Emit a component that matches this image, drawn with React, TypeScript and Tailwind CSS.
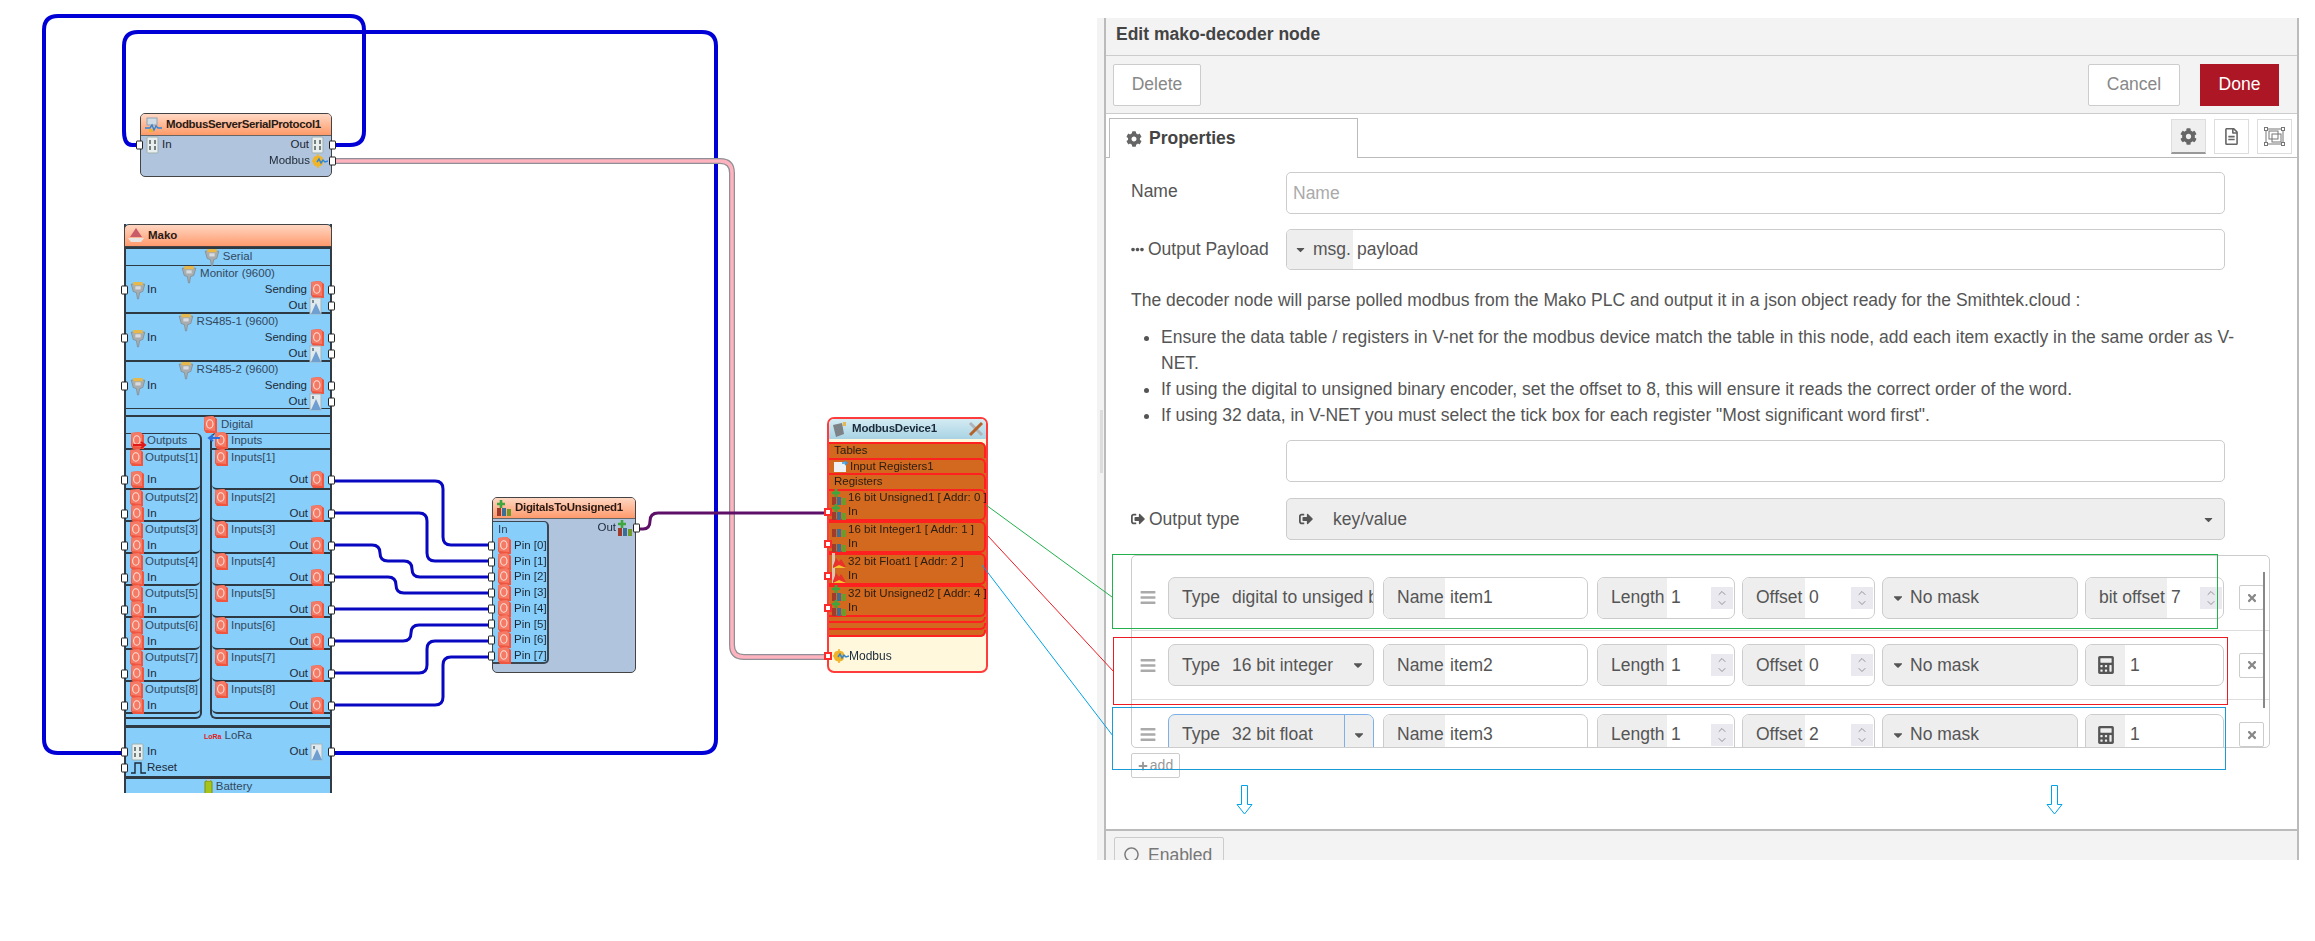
import type { ReactNode } from 'react';
import { ChevronDown, ChevronUp } from 'lucide-react';
import {
  FaBars,
  FaCalculator,
  FaCaretDown,
  FaCog,
  FaEllipsisH,
  FaPlus,
  FaRegCircle,
  FaRegFileAlt,
  FaSignOutAlt,
  FaTimes,
} from 'react-icons/fa';

// rounded polyline for the wires
function route(pts: number[][], r = 9) {
  let d = `M${pts[0][0]} ${pts[0][1]}`;
  for (let i = 1; i < pts.length - 1; i++) {
    const [px, py] = pts[i - 1];
    const [x, y] = pts[i];
    const [nx, ny] = pts[i + 1];
    const a = Math.min(r, Math.hypot(x - px, y - py) / 2);
    const b = Math.min(r, Math.hypot(nx - x, ny - y) / 2);
    const la = Math.hypot(x - px, y - py);
    const lb = Math.hypot(nx - x, ny - y);
    d += `L${x - ((x - px) / la) * a} ${y - ((y - py) / la) * a}`;
    d += `Q${x} ${y} ${x + ((nx - x) / lb) * b} ${y + ((ny - y) / lb) * b}`;
  }
  const last = pts[pts.length - 1];
  return d + `L${last[0]} ${last[1]}`;
}

const digitalWires = [
  [[332, 481], [443, 481], [443, 545], [492, 545]],
  [[332, 513], [427, 513], [427, 561], [492, 561]],
  [[332, 545], [380, 545], [380, 561], [412, 561], [412, 577], [492, 577]],
  [[332, 577], [396, 577], [396, 593], [492, 593]],
  [[332, 609], [492, 609]],
  [[332, 641], [411, 641], [411, 625], [492, 625]],
  [[332, 673], [427, 673], [427, 641], [492, 641]],
  [[332, 705], [443, 705], [443, 657], [492, 657]],
];

function Wires() {
  return (
    <svg className="absolute inset-0" width="1097" height="941" fill="none">
      <path d={route([[123, 753], [44, 753], [44, 16], [364, 16], [364, 145], [332, 145]], 14)} stroke="#0000d6" strokeWidth="4" />
      <path d={route([[332, 753], [716, 753], [716, 32], [124, 32], [124, 145], [140, 145]], 14)} stroke="#0000d6" strokeWidth="4" />
      <path d={route([[332, 161], [732, 161], [732, 657], [828, 657]], 12)} stroke="#8f8f95" strokeWidth="6" />
      <path d={route([[332, 161], [732, 161], [732, 657], [828, 657]], 12)} stroke="#ffb3bf" strokeWidth="3.5" />
      {digitalWires.map((w, i) => (
        <path key={i} d={route(w, 8)} stroke="#0808c0" strokeWidth="3" />
      ))}
      <path d={route([[636, 529], [650, 529], [650, 513], [828, 513]], 8)} stroke="#5e1068" strokeWidth="3" />
    </svg>
  );
}

function RedIcon({ arrow }: { arrow?: 'in' | 'out' }) {
  return (
    <svg width="15" height="18" viewBox="0 0 15 18" className="shrink-0 overflow-visible">
      <path d="M1 1 L10 0 L14 3 L14 17 L3 17 L1 14Z" fill="#f0553f" />
      <path d="M1 1 L10 0 L12 2 L12 15 L2 14Z" fill="#f47a66" />
      <ellipse cx="6.8" cy="8" rx="3.2" ry="4.2" fill="none" stroke="#ffe0d8" strokeWidth="1.1" />
      {arrow === 'out' && <path d="M3 13 H14 M11 10 L15 13 L11 16" stroke="#e01818" strokeWidth="2" fill="none" />}
      {arrow === 'in' && <path d="M-4 6 H6 M-1 3 L-5 6 L-1 9" stroke="#2e6fe0" strokeWidth="2" fill="none" />}
    </svg>
  );
}

function PlugIcon() {
  return (
    <svg width="16" height="19" viewBox="0 0 15 18" className="shrink-0">
      <path d="M1 3 H14 L12 10 L9 11 L8 17 H7 L6 11 L3 10Z" fill="#a8adb0" stroke="#7b8085" strokeWidth="0.6" />
      <rect x="3" y="1" width="9" height="3" fill="#e8b84a" />
      <rect x="5" y="5" width="5" height="3" fill="#d8dcdf" />
    </svg>
  );
}

function BinIcon() {
  return (
    <svg width="14" height="18" viewBox="0 0 14 18" className="shrink-0">
      <rect x="1" y="1" width="11" height="16" rx="1" fill="#e9efee" stroke="#9fb0ae" />
      <rect x="3" y="4" width="2" height="4" fill="#75807f" />
      <rect x="8" y="4" width="2" height="4" fill="#75807f" />
      <rect x="3" y="10" width="2" height="4" fill="#75807f" />
      <rect x="8" y="10" width="2" height="4" fill="#75807f" />
    </svg>
  );
}

function StreamIcon() {
  return (
    <svg width="14" height="18" viewBox="0 0 14 18" className="shrink-0">
      <rect x="1" y="1" width="11" height="16" fill="#dfe9ee" stroke="#a7b5bd" />
      <path d="M7 6 L12 17 H2Z" fill="#6e9fd0" />
      <rect x="3" y="3" width="2" height="3" fill="#7d8a92" />
    </svg>
  );
}

function GearWaveIcon() {
  return (
    <svg width="16" height="14" viewBox="0 0 16 14" className="shrink-0">
      <circle cx="6" cy="7" r="5.5" fill="#f0b429" />
      <path d="M6 0 V14 M0 7 H12 M2 3 L10 11 M10 3 L2 11" stroke="#f0b429" strokeWidth="1.6" />
      <path d="M5 8 L7 5 L9 9 L11 6 L13 8 L16 7" stroke="#2e86d8" strokeWidth="1.4" fill="none" />
    </svg>
  );
}

function NumIcon({ plus = true }: { plus?: boolean }) {
  return (
    <svg width="16" height="18" viewBox="0 0 16 18" className="shrink-0">
      {plus && <path d="M5 1 V9 M1 5 H9" stroke="#3da63d" strokeWidth="2.6" />}
      <rect x="1" y="9" width="4" height="8" fill="#a33b2a" />
      <rect x="6" y="9" width="4" height="8" fill="#3b6f96" />
      <rect x="11" y="10" width="4" height="7" fill="#6f9a2a" />
    </svg>
  );
}

function FireIcon() {
  return (
    <svg width="16" height="18" viewBox="0 0 16 18" className="shrink-0">
      <path d="M1 1 L4 1 L4 16 L1 16Z" fill="#d9c7b4" />
      <path d="M2 14 L5 6 L8 10 L10 7 L15 15 L2 16Z" fill="#e8322a" />
      <path d="M2 16 L8 13 L15 16Z" fill="#f2c230" />
    </svg>
  );
}

// white (or red) connector square sitting on the node edge
function Pin({ side, red = false }: { side: 'l' | 'r'; red?: boolean }) {
  return (
    <span
      className={`absolute top-1/2 -translate-y-1/2 z-10 bg-white ${
        red ? 'w-[8px] h-[8px] border-2 border-[#ff2a2a]' : 'w-[7px] h-[9px] border-[1.5px] border-[#222] rounded-[1px]'
      } ${side === 'l' ? '-left-[5px]' : '-right-[5px]'}`}
    />
  );
}

function Line({ children, className = '' }: { children?: ReactNode; className?: string }) {
  return <div className={`relative flex h-[16px] items-center ${className}`}>{children}</div>;
}

function Title({ icon, label, dim = true }: { icon?: ReactNode; label: string; dim?: boolean }) {
  return (
    <Line className="justify-center gap-[3px]">
      {icon}
      <span className={dim ? 'text-[#33485e]' : ''}>{label}</span>
    </Line>
  );
}

function Divider() {
  return <div className="h-[2px] bg-[#2d3a44]" />;
}

function SerialBlock({ name }: { name: string }) {
  return (
    <div className="h-[46px] border-b-0">
      <Title icon={<PlugIcon />} label={name} />
      <Line className="pl-[4px] gap-[1px]">
        <Pin side="l" />
        <PlugIcon />
        <span>In</span>
        <span className="ml-auto">Sending</span>
        <span className="mr-[5px] ml-[2px]">
          <RedIcon />
        </span>
        <Pin side="r" />
      </Line>
      <Line className="justify-end pr-[7px] gap-[2px]">
        <span>Out</span>
        <StreamIcon />
        <Pin side="r" />
      </Line>
    </div>
  );
}

function ServerNode() {
  return (
    <div className="absolute left-[140px] top-[113px] w-[192px] h-[64px] rounded-[5px] border border-[#444] bg-[#b0c4de] text-[11.5px] text-[#1d2733] leading-none font-['Liberation_Sans',sans-serif]">
      <div className="flex h-[22px] items-center gap-[4px] rounded-t-[4px] border-b border-[#666] bg-gradient-to-b from-[#ffd8c4] to-[#ff9a68] pl-[4px]">
        <svg width="17" height="16" viewBox="0 0 17 16">
          <rect x="2" y="1" width="10" height="7" fill="#cfdce6" stroke="#8fa3b5" />
          <path d="M0 11 H5 L7 8 L9 13 L11 9 L13 11 H17" stroke="#2e86d8" fill="none" strokeWidth="1.4" />
          <rect x="4" y="12" width="4" height="3" fill="#f0b429" />
        </svg>
        <span className="font-bold text-[11.5px] tracking-[-0.35px] text-[#2a1a14]">ModbusServerSerialProtocol1</span>
      </div>
      <Line className="mt-[1px] pl-[5px] pr-[6px] gap-[2px]">
        <Pin side="l" />
        <BinIcon />
        <span>In</span>
        <span className="ml-auto">Out</span>
        <BinIcon />
        <Pin side="r" />
      </Line>
      <Line className="justify-end pr-[3px] gap-[2px]">
        <span>Modbus</span>
        <GearWaveIcon />
        <Pin side="r" />
      </Line>
    </div>
  );
}

function MakoNode() {
  const outRows = [1, 2, 3, 4, 5, 6, 7, 8];
  return (
    <div className="absolute left-[124px] top-[224px] w-[208px] h-[569px] border-x-2 border-[#333c44] bg-[#87cefa] text-[11.5px] text-[#1c2a38] leading-none font-['Liberation_Sans',sans-serif]">
      <div className="-mx-[2px] flex h-[23px] items-center gap-[4px] rounded-t-[5px] border border-[#444] bg-gradient-to-b from-[#ffd6c2] to-[#ff9a6c] pl-[3px]">
        <svg width="16" height="17" viewBox="0 0 16 17">
          <path d="M8 1 L14 10 H2Z" fill="#c95a68" />
          <path d="M0 11 H16 L13 15 H3Z" fill="#e8e4e2" />
        </svg>
        <span className="font-bold text-[#2a1a14]">Mako</span>
      </div>
      <Divider />
      <Title icon={<PlugIcon />} label="Serial" />
      <div className="h-[1px] bg-[#2d3a44]" />
      <SerialBlock name="Monitor (9600)" />
      <Divider />
      <SerialBlock name="RS485-1 (9600)" />
      <Divider />
      <SerialBlock name="RS485-2 (9600)" />
      <div className="h-[1px] bg-[#2d3a44]" />
      <div className="h-[6px]" />
      <Divider />
      {/* Digital group */}
      <div className="h-[308px]">
        <Title icon={<RedIcon />} label="Digital" />
        <div className="flex h-[286px] justify-between">
          <div className="flex w-[76px] flex-col rounded-r-[6px] border-r-2 border-t border-b-2 border-[#2d3a44]">
            <Line className="gap-[2px] pl-[4px] border-b-2 border-[#2d3a44]">
              <RedIcon arrow="out" />
              <span className="text-[#33485e]">Outputs</span>
            </Line>
            {outRows.map((n) => (
              <div key={n} className={`flex flex-col justify-between rounded-br-[5px] border-b-2 border-[#2d3a44] ${n === 1 ? 'h-[40px]' : 'h-[32px]'}`}>
                <Line className="gap-[1px] pl-[3px]">
                  <RedIcon />
                  <span className="text-[#33485e] whitespace-nowrap">{`Outputs[${n}]`}</span>
                </Line>
                <Line className="gap-[2px] pl-[4px]">
                  <Pin side="l" />
                  <RedIcon />
                  <span>In</span>
                </Line>
              </div>
            ))}
          </div>
          <div className="flex w-[120px] flex-col rounded-l-[6px] border-l-2 border-t border-b-2 border-[#2d3a44]">
            <Line className="gap-[2px] pl-[2px] border-b-2 border-[#2d3a44]">
              <RedIcon arrow="in" />
              <span className="text-[#33485e]">Inputs</span>
            </Line>
            {outRows.map((n) => (
              <div key={n} className={`flex flex-col justify-between rounded-bl-[5px] border-b-2 border-[#2d3a44] ${n === 1 ? 'h-[40px]' : 'h-[32px]'}`}>
                <Line className="gap-[2px] pl-[2px]">
                  <RedIcon />
                  <span className="text-[#33485e]">{`Inputs[${n}]`}</span>
                </Line>
                <Line className="justify-end gap-[2px] pr-[5px]">
                  <span>Out</span>
                  <RedIcon />
                  <Pin side="r" />
                </Line>
              </div>
            ))}
          </div>
        </div>
      </div>
      <div className="h-[3px] bg-[#2d3a44]" />
      {/* LoRa */}
      <div className="h-[48px]">
        <Title icon={<span className="text-[7px] font-bold text-[#e02020]">LoRa</span>} label="LoRa" />
        <Line className="pl-[5px] pr-[6px] gap-[2px]">
          <Pin side="l" />
          <BinIcon />
          <span>In</span>
          <span className="ml-auto">Out</span>
          <StreamIcon />
          <Pin side="r" />
        </Line>
        <Line className="pl-[5px] gap-[1px]">
          <Pin side="l" />
          <svg width="15" height="12" viewBox="0 0 15 12" fill="none">
            <path d="M0 11 H4 V1 H10 V11 H15" stroke="#1c2a38" strokeWidth="1.4" />
          </svg>
          <span>Reset</span>
        </Line>
      </div>
      <div className="h-[3px] bg-[#2d3a44]" />
      <div className="h-[14px] overflow-hidden">
        <Title
          icon={
            <svg width="9" height="16" viewBox="0 0 9 16">
              <rect x="1" y="2" width="7" height="13" rx="1" fill="#a6c41c" stroke="#7b8f10" />
              <rect x="3" y="0" width="3" height="2" fill="#c0c0c0" />
            </svg>
          }
          label="Battery"
        />
      </div>
    </div>
  );
}

function DigitalsNode() {
  const pins = [0, 1, 2, 3, 4, 5, 6, 7];
  return (
    <div className="absolute left-[492px] top-[497px] w-[144px] h-[176px] rounded-[5px] border border-[#444] bg-[#b0c4de] text-[11.5px] text-[#1c2a38] leading-none font-['Liberation_Sans',sans-serif]">
      <div className="flex h-[21px] items-center gap-[3px] rounded-t-[4px] border-b border-[#666] bg-gradient-to-b from-[#ffd6c2] to-[#ff9a6c] pl-[3px]">
        <NumIcon />
        <span className="font-bold text-[11.5px] tracking-[-0.3px] text-[#2a1a14]">DigitalsToUnsigned1</span>
      </div>
      <div className="flex items-start justify-between">
        <div className="mt-[2px] h-[143px] w-[56px] rounded-r-[5px] border-r-2 border-b-2 border-t border-[#3b4650] bg-[#87cefa]">
          <Line className="pl-[5px] text-[#33485e]">In</Line>
          {pins.map((p) => (
            <div key={p} className="relative flex h-[15.7px] items-center gap-[2px] pl-[4px]">
              <Pin side="l" />
              <RedIcon />
              <span className="whitespace-nowrap">{`Pin [${p}]`}</span>
            </div>
          ))}
        </div>
        <Line className="mt-[1px] pr-[2px] gap-[1px]">
          <span>Out</span>
          <NumIcon />
          <Pin side="r" />
        </Line>
      </div>
    </div>
  );
}

const registers = [
  { label: '16 bit Unsigned1 [ Addr: 0 ]', icon: <NumIcon />, cls: 'h-[32px]' },
  { label: '16 bit Integer1 [ Addr: 1 ]', icon: <NumIcon plus={false} />, cls: 'h-[32px]' },
  { label: '32 bit Float1 [ Addr: 2 ]', icon: <FireIcon />, cls: 'h-[33px]' },
  { label: '32 bit Unsigned2 [ Addr: 4 ]', icon: <NumIcon />, cls: 'h-[32px]' },
];

function DeviceNode() {
  return (
    <div className="absolute left-[827px] top-[417px] flex w-[161px] h-[256px] flex-col rounded-[7px] border-2 border-[#ff3b3b] bg-[#fff8dc] text-[11.5px] text-[#2a1c12] leading-none font-['Liberation_Sans',sans-serif]">
      <div className="flex h-[20px] items-center gap-[4px] rounded-t-[5px] bg-gradient-to-b from-[#d4ebf3] to-[#a8d3e4] pl-[2px] pr-[2px]">
        <svg width="17" height="17" viewBox="0 0 17 17">
          <path d="M2 4 L11 2 L13 13 L5 16Z" fill="#7d8286" />
          <path d="M12 1 L15 1 L15 5 L12 5Z" fill="#e8b84a" />
        </svg>
        <span className="font-bold text-[#1a2a3a] tracking-[-0.2px]">ModbusDevice1</span>
        <svg className="ml-auto" width="16" height="16" viewBox="0 0 16 16" fill="none">
          <path d="M2 2 L14 14" stroke="#b0b4b8" strokeWidth="3" />
          <path d="M14 2 L2 14" stroke="#b4622a" strokeWidth="3" />
        </svg>
      </div>
      <div className="mt-[3px] flex h-[195px] flex-col rounded-r-[6px] bg-[#d2691e]">
        {['Tables', 'Input Registers1', 'Registers'].map((t, i) => (
          <div key={t} className="flex h-[16px] items-center gap-[2px] rounded-tr-[6px] border-t-2 border-r-2 border-[#ff2020] pl-[5px]">
            {i === 1 && (
              <svg width="14" height="12" viewBox="0 0 14 12">
                <rect x="0" y="2" width="12" height="10" fill="#eef2f4" />
                <path d="M8 3 L13 3 M11 1 L13 3 L11 5" stroke="#3a9ae0" fill="none" strokeWidth="1.4" />
              </svg>
            )}
            <span>{t}</span>
          </div>
        ))}
        {registers.map((r) => (
          <div key={r.label} className={`${r.cls} flex flex-col rounded-r-[6px] border-y-2 border-r-2 border-[#ff2020]`}>
            <div className="flex h-[14px] items-center gap-[1px] pl-[2px]">
              <span className="-mt-[2px]">{r.icon}</span>
              <span className="whitespace-nowrap">{r.label}</span>
            </div>
            <div className="relative flex h-[14px] items-center gap-[1px] pl-[2px]">
              <Pin side="l" red />
              {r.icon}
              <span>In</span>
            </div>
          </div>
        ))}
        <div className="h-[7px] rounded-br-[6px] border-b-2 border-r-2 border-[#ff2020]" />
        <div className="h-[7px] rounded-br-[6px] border-b-2 border-r-2 border-[#ff2020]" />
        <div className="h-[7px] rounded-br-[6px] border-b-2 border-r-2 border-[#ff2020]" />
      </div>
      <div className="relative mt-auto mb-[7px] flex h-[16px] items-center pl-[4px]">
        <Pin side="l" red />
        <GearWaveIcon />
        <span className="text-[12px] text-[#1a2a3a]">Modbus</span>
      </div>
    </div>
  );
}

function LabelCell({ children, w }: { children: ReactNode; w: string }) {
  return <div className={`flex h-full shrink-0 items-center bg-[#eee] ${w}`}>{children}</div>;
}

function Spinner() {
  return (
    <div className="absolute right-[1px] top-1/2 flex h-[22px] w-[22px] -translate-y-1/2 flex-col items-center justify-center bg-[#e9e9ef] text-[#777]">
      <ChevronUp size={12} strokeWidth={1.5} className="-mb-[1px]" />
      <ChevronDown size={12} strokeWidth={1.5} className="-mt-[1px]" />
    </div>
  );
}

const group = 'relative flex h-[42px] shrink-0 items-center overflow-hidden rounded-[7px] border';

function DecoderRow({ type, focused, name, offset, last, rowCls }: { type: string; focused?: boolean; name: string; offset: string; last: ReactNode; rowCls: string }) {
  return (
    <li className={`flex items-center pl-[8px] border-b border-[#ddd] last:border-b-0 ${rowCls}`}>
      <FaBars size={17} className="mr-[12px] w-[16px] shrink-0 text-[#aaa]" />
      <div className="flex items-center">
        <div className={`${group} w-[206px] bg-[#eee] ${focused ? 'border-[#7eb0e8]' : 'border-[#ccc]'}`}>
          <span className="ml-[13px] w-[50px] shrink-0">Type</span>
          <span className="whitespace-nowrap">{type}</span>
          {focused && (
            <span className="absolute inset-y-0 right-0 flex w-[29px] items-center justify-center border-l border-[#7eb0e8] bg-[#eee]">
              <FaCaretDown size={14} />
            </span>
          )}
          {!focused && type !== 'digital to unsiged binary' && <FaCaretDown size={14} className="absolute right-[8px]" />}
        </div>
        <div className={`${group} ml-[9px] w-[205px] border-[#ccc] bg-white`}>
          <LabelCell w="w-[61px] pl-[13px]">Name</LabelCell>
          <span className="ml-[5px]">{name}</span>
        </div>
        <div className={`${group} ml-[9px] w-[138px] border-[#ccc] bg-white`}>
          <LabelCell w="w-[69px] pl-[13px]">Length</LabelCell>
          <span className="ml-[4px]">1</span>
          <Spinner />
        </div>
        <div className={`${group} ml-[7px] w-[133px] border-[#ccc] bg-white`}>
          <LabelCell w="w-[62px] pl-[13px]">Offset</LabelCell>
          <span className="ml-[4px]">{offset}</span>
          <Spinner />
        </div>
        <div className={`${group} ml-[7px] w-[196px] border-[#ccc] bg-[#eee]`}>
          <FaCaretDown size={14} className="ml-[8px] mr-[5px]" />
          <span>No mask</span>
        </div>
        <div className={`${group} ml-[7px] w-[139px] border-[#ccc] bg-white`}>{last}</div>
        <button className="ml-[15px] flex h-[25px] w-[25px] shrink-0 items-center justify-center rounded-[2px] border border-[#ccc] bg-white text-[#888]">
          <FaTimes size={12} />
        </button>
      </div>
    </li>
  );
}

function CalcCell() {
  return (
    <>
      <LabelCell w="w-[39px] justify-center">
        <FaCalculator size={18} className="text-[#555]" />
      </LabelCell>
      <span className="ml-[5px]">1</span>
    </>
  );
}

function EditPanel() {
  return (
    <div className="mt-[18px] flex h-[842px] w-[1202px] shrink-0 text-[17.5px] text-[#555] font-['Liberation_Sans',sans-serif]">
      {/* drag strip */}
      <div className="flex w-[7px] shrink-0 items-start bg-[#f3f3f3]">
        <div className="mt-[392px] ml-[3px] h-[63px] w-[3px] bg-[#ddd]" />
      </div>
      <div className="flex min-w-0 grow flex-col border-x-2 border-[#bbb] bg-white">
        <div className="flex h-[38px] shrink-0 items-center border-b border-[#ccc] bg-[#f3f3f3] pb-[5px] pl-[10px] font-bold text-[#444]">
          Edit mako-decoder node
        </div>
        <div className="flex h-[58px] shrink-0 items-center border-b border-[#ccc] bg-[#f3f3f3] pl-[7px] pr-[18px]">
          <button className="h-[42px] w-[88px] rounded-[2px] border border-[#ccc] bg-white text-[#888]">Delete</button>
          <button className="ml-auto h-[42px] w-[92px] rounded-[2px] border border-[#ccc] bg-white text-[#888]">Cancel</button>
          <button className="ml-[20px] h-[42px] w-[79px] bg-[#ad1625] text-white">Done</button>
        </div>
        <div className="flex h-[44px] shrink-0 items-end justify-between border-b border-[#bbb] pl-[3px] pr-[5px]">
          <div className="-mb-px flex h-[40px] w-[249px] items-center gap-[7px] border-x border-t border-[#bbb] bg-white pl-[16px] font-bold text-[#444]">
            <FaCog size={16} className="text-[#666]" />
            Properties
          </div>
          <div className="mb-[3px] flex gap-[8px]">
            <span className="flex h-[35px] w-[35px] items-center justify-center border border-b-2 border-[#ddd] border-b-[#999] bg-[#efefef] text-[#666]">
              <FaCog size={17} />
            </span>
            <span className="flex h-[35px] w-[35px] items-center justify-center border border-[#ddd] text-[#666]">
              <FaRegFileAlt size={17} />
            </span>
            <span className="flex h-[35px] w-[35px] items-center justify-center border border-[#ddd] text-[#666]">
              <svg width="21" height="19" viewBox="0 0 21 19" fill="none" stroke="#777" strokeWidth="1">
                <rect x="2" y="2" width="17" height="15" />
                <rect x="5" y="4" width="9" height="8" />
                <rect x="8" y="7" width="9" height="8" />
                <rect x="0.5" y="0.5" width="3" height="3" fill="#fff" />
                <rect x="17.5" y="0.5" width="3" height="3" fill="#fff" />
                <rect x="0.5" y="15.5" width="3" height="3" fill="#fff" />
                <rect x="17.5" y="15.5" width="3" height="3" fill="#fff" />
              </svg>
            </span>
          </div>
        </div>
        <div className="flex grow flex-col pl-[25px]">
          <div className="mt-[14px] flex h-[42px] w-[1094px] items-center">
            <label className="w-[155px] shrink-0 -mt-[3px]">Name</label>
            <div className="flex h-full grow items-center rounded-[5px] border border-[#ccc] pl-[6px] text-[#aaa]">Name</div>
          </div>
          <div className="mt-[15px] flex h-[41px] w-[1094px] items-center">
            <label className="flex w-[155px] shrink-0 items-center gap-[4px] whitespace-nowrap">
              <FaEllipsisH size={13} />
              Output Payload
            </label>
            <div className="flex h-full grow items-center overflow-hidden rounded-[5px] border border-[#ccc]">
              <span className="flex h-full w-[66px] items-center gap-[6px] bg-[#eee] pl-[7px]">
                <FaCaretDown size={13} />
                msg.
              </span>
              <span className="ml-[4px]">payload</span>
            </div>
          </div>
          <p className="mt-[17px] h-[26px] leading-[26px] whitespace-nowrap">
            The decoder node will parse polled modbus from the Mako PLC and output it in a json object ready for the Smithtek.cloud :
          </p>
          <ul className="mt-[11px] w-[1108px] list-disc pl-[30px] leading-[26px]">
            <li>Ensure the data table / registers in V-net for the modbus device match the table in this node, add each item exactly in the same order as V-NET.</li>
            <li>If using the digital to unsigned binary encoder, set the offset to 8, this will ensure it reads the correct order of the word.</li>
            <li>If using 32 data, in V-NET you must select the tick box for each register "Most significant word first".</li>
          </ul>
          <div className="mt-[12px] ml-[155px] h-[42px] w-[939px] rounded-[5px] border border-[#ccc]" />
          <div className="mt-[16px] flex h-[42px] w-[1094px] items-center">
            <label className="flex w-[155px] shrink-0 items-center gap-[4px]">
              <FaSignOutAlt size={14} />
              Output type
            </label>
            <div className="flex h-full grow items-center rounded-[5px] border border-[#ccc] bg-[#eee] pl-[12px] pr-[9px]">
              <FaSignOutAlt size={14} className="mr-[20px]" />
              key/value
              <FaCaretDown size={13} className="ml-auto" />
            </div>
          </div>
          <div className="relative mt-[15px] h-[193px] w-[1139px] overflow-hidden rounded-[5px] border border-[#ccc]">
            <ul>
              <DecoderRow
                rowCls="h-[75px] pt-[9px]"
                type="digital to unsiged binary"
                name="item1"
                offset="0"
                last={
                  <>
                    <LabelCell w="w-[81px] pl-[13px] whitespace-nowrap">bit offset</LabelCell>
                    <span className="ml-[4px]">7</span>
                    <Spinner />
                  </>
                }
              />
              <DecoderRow rowCls="h-[69px]" type="16 bit integer" name="item2" offset="0" last={<CalcCell />} />
              <DecoderRow rowCls="h-[69px]" type="32 bit float" focused name="item3" offset="2" last={<CalcCell />} />
            </ul>
            <div className="absolute right-[4px] top-[16px] h-[136px] w-[2px] bg-[#888]" />
          </div>
          <button className="mt-[5px] flex h-[25px] w-[49px] items-center justify-center gap-[2px] rounded-[2px] border border-[#ccc] text-[14px] text-[#999]">
            <FaPlus size={10} />
            add
          </button>
        </div>
        <div className="h-[31px] shrink-0 overflow-hidden border-t-2 border-[#bbb] bg-[#f3f3f3] pl-[8px] pt-[6px]">
          <div className="flex h-[40px] w-[110px] items-start gap-[9px] rounded-[2px] border border-[#ccc] pl-[9px] pt-[9px] leading-none text-[#777]">
            <FaRegCircle size={15} />
            Enabled
          </div>
        </div>
      </div>
    </div>
  );
}

// coloured mark-ups drawn over the whole picture
function Annotations() {
  const arrow = (x: number) => `M${x + 5.5} 785.5 H${x + 11.5} V804.5 H${x + 16} L${x + 8.5} 814 L${x + 1} 804.5 H${x + 5.5}Z`;
  return (
    <svg className="absolute inset-0 pointer-events-none z-20" width="2315" height="941" fill="none" strokeWidth="1">
      <path d="M986 505 L1112 597" stroke="#22b14c" />
      <rect x="1112.5" y="554.5" width="1105" height="74" stroke="#22b14c" />
      <path d="M988 536 L1114 672" stroke="#ed1c24" />
      <rect x="1113.5" y="637.5" width="1114" height="67" stroke="#ed1c24" />
      <path d="M982 565 L1113 736" stroke="#00a2e8" />
      <rect x="1112.5" y="707.5" width="1113" height="62" stroke="#1a9ad6" />
      <path d={arrow(1236)} stroke="#00a2e8" />
      <path d={arrow(2046)} stroke="#00a2e8" />
    </svg>
  );
}

export default function App() {
  return (
    <div className="relative flex h-[941px] w-[2315px] overflow-hidden bg-white">
      <div className="relative h-full w-[1097px] shrink-0 blur-[0.4px]">
        <Wires />
        <ServerNode />
        <MakoNode />
        <DigitalsNode />
        <DeviceNode />
      </div>
      <EditPanel />
      <Annotations />
    </div>
  );
}
